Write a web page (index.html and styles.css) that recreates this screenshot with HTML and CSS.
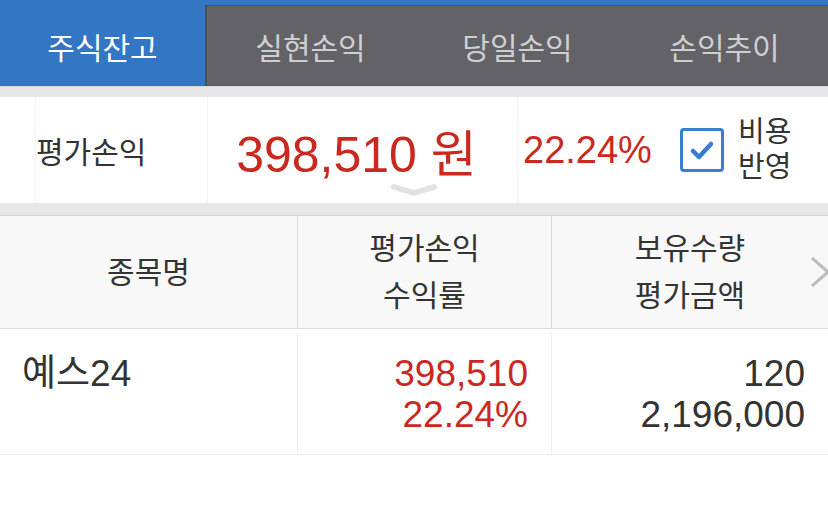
FILE: index.html
```html
<!DOCTYPE html>
<html lang="ko">
<head>
    <meta charset="UTF-8">
    <title>주식잔고</title>
    <link rel="stylesheet" href="styles.css">
</head>
<body>
    <div class="top-bar"></div>
    <!-- Tabs -->
    <nav class="tabs">
        <div class="tab active">주식잔고</div>
        <div class="tab">실현손익</div>
        <div class="tab">당일손익</div>
        <div class="tab">손익추이</div>
    </nav>

    <div class="gap"></div>

    <!-- Summary -->
    <section class="summary">
        <div class="sum-label">평가손익</div>
        <div class="sum-amount">398,510 원</div>
        <div class="sum-rate">22.24%</div>
        <div class="sum-option">
            <span class="checkbox">
                <svg width="26" height="22" viewBox="0 0 26 22">
                    <path d="M4 12 L10 18 L22 5" fill="none" stroke="#3a7cd0" stroke-width="4.5" stroke-linecap="round" stroke-linejoin="round"/>
                </svg>
            </span>
            <span class="option-text">비용<br>반영</span>
        </div>
        <svg class="expand" width="48" height="14" viewBox="0 0 48 14">
            <path d="M4 4 L24 10 L44 4" fill="none" stroke="#e2e2e2" stroke-width="6" stroke-linecap="round" stroke-linejoin="round"/>
        </svg>
    </section>

    <div class="gap gap-bottom"></div>

    <!-- Holdings table -->
    <div class="table">
        <div class="row head">
            <div class="cell name">종목명</div>
            <div class="cell">평가손익<br>수익률</div>
            <div class="cell">보유수량<br>평가금액</div>
            <svg class="more" width="22" height="32" viewBox="0 0 22 32">
                <path d="M3 2 L19 16 L3 30" fill="none" stroke="#bdbdbd" stroke-width="3"/>
            </svg>
        </div>
        <div class="row body">
            <div class="cell name">예스24</div>
            <div class="cell num red">398,510<br>22.24%</div>
            <div class="cell num">120<br>2,196,000</div>
        </div>
    </div>
</body>
</html>
```

FILE: styles.css
```css
body {
    margin: 0;
    font-family: "Liberation Sans", "Noto Sans CJK KR", sans-serif;
    color: #333;
    background: #fff;
}

.top-bar {
    height: 5px;
    background: #3276c4;
}

/* Tabs */
.tabs {
    display: grid;
    grid-template-columns: 207px 207px 207px 207px;
    height: 81px;
    background: #636267;
}

.tab {
    display: flex;
    align-items: center;
    justify-content: center;
    font-size: 30px;
    color: #cfcfd1;
    border-top: 1px solid #535257;
}

.tab.active {
    background: #3276c4;
    color: #fff;
    border-top: none;
    border-right: 2px solid #4e4e53;
}

.gap {
    height: 10px;
    background: #e7e7e7;
    border-top: 1px solid #d6d6d6;
}

.gap-bottom {
    height: 12px;
    border-top: none;
    border-bottom: 1px solid #d6d6d6;
}

/* Summary */
.summary {
    position: relative;
    display: grid;
    grid-template-columns: 172px 310px 175px 136px;
    height: 106px;
    padding-left: 35px;
}

.summary > div {
    display: flex;
    align-items: center;
    border-left: 1px solid #f3f3f3;
}

.sum-label {
    font-size: 30px;
    color: #333;
}

.sum-amount {
    justify-content: center;
    padding-right: 12px;
    font-size: 50px;
    color: #c9291f;
}

.sum-rate {
    padding-left: 5px;
    font-size: 38px;
    color: #c9291f;
}

.sum-option {
    margin-left: -12px;
    border-left: none !important;
}

.checkbox {
    display: flex;
    align-items: center;
    justify-content: center;
    width: 38px;
    height: 38px;
    border: 3px solid #3a7cd0;
    border-radius: 4px;
    background: #fff;
}

.option-text {
    margin-left: 14px;
    font-size: 29px;
    line-height: 35px;
    color: #333;
}

.expand {
    position: absolute;
    left: 390px;
    bottom: 6px;
}

/* Table */
.row {
    position: relative;
    display: grid;
    grid-template-columns: 297px 254px 277px;
}

.head {
    height: 112px;
    background: #f8f8f8;
    border-bottom: 1px solid #dcdcdc;
}

.head .cell {
    display: flex;
    align-items: center;
    justify-content: center;
    text-align: center;
    font-size: 30px;
    line-height: 47px;
    border-left: 1px solid #d9d9d9;
}

.head .cell.name {
    border-left: none;
}

.more {
    position: absolute;
    right: -3px;
    top: 40px;
}

.body {
    height: 125px;
    border-bottom: 1px solid #eeeeee;
}

.body .cell {
    margin-top: 3px;
    padding: 21px 23px 0 22px;
    font-size: 37px;
    line-height: 41px;
    border-left: 1px solid #efefef;
}

.body .cell.name {
    border-left: none;
}

.body .num {
    text-align: right;
}

.red {
    color: #c9291f;
}
```
